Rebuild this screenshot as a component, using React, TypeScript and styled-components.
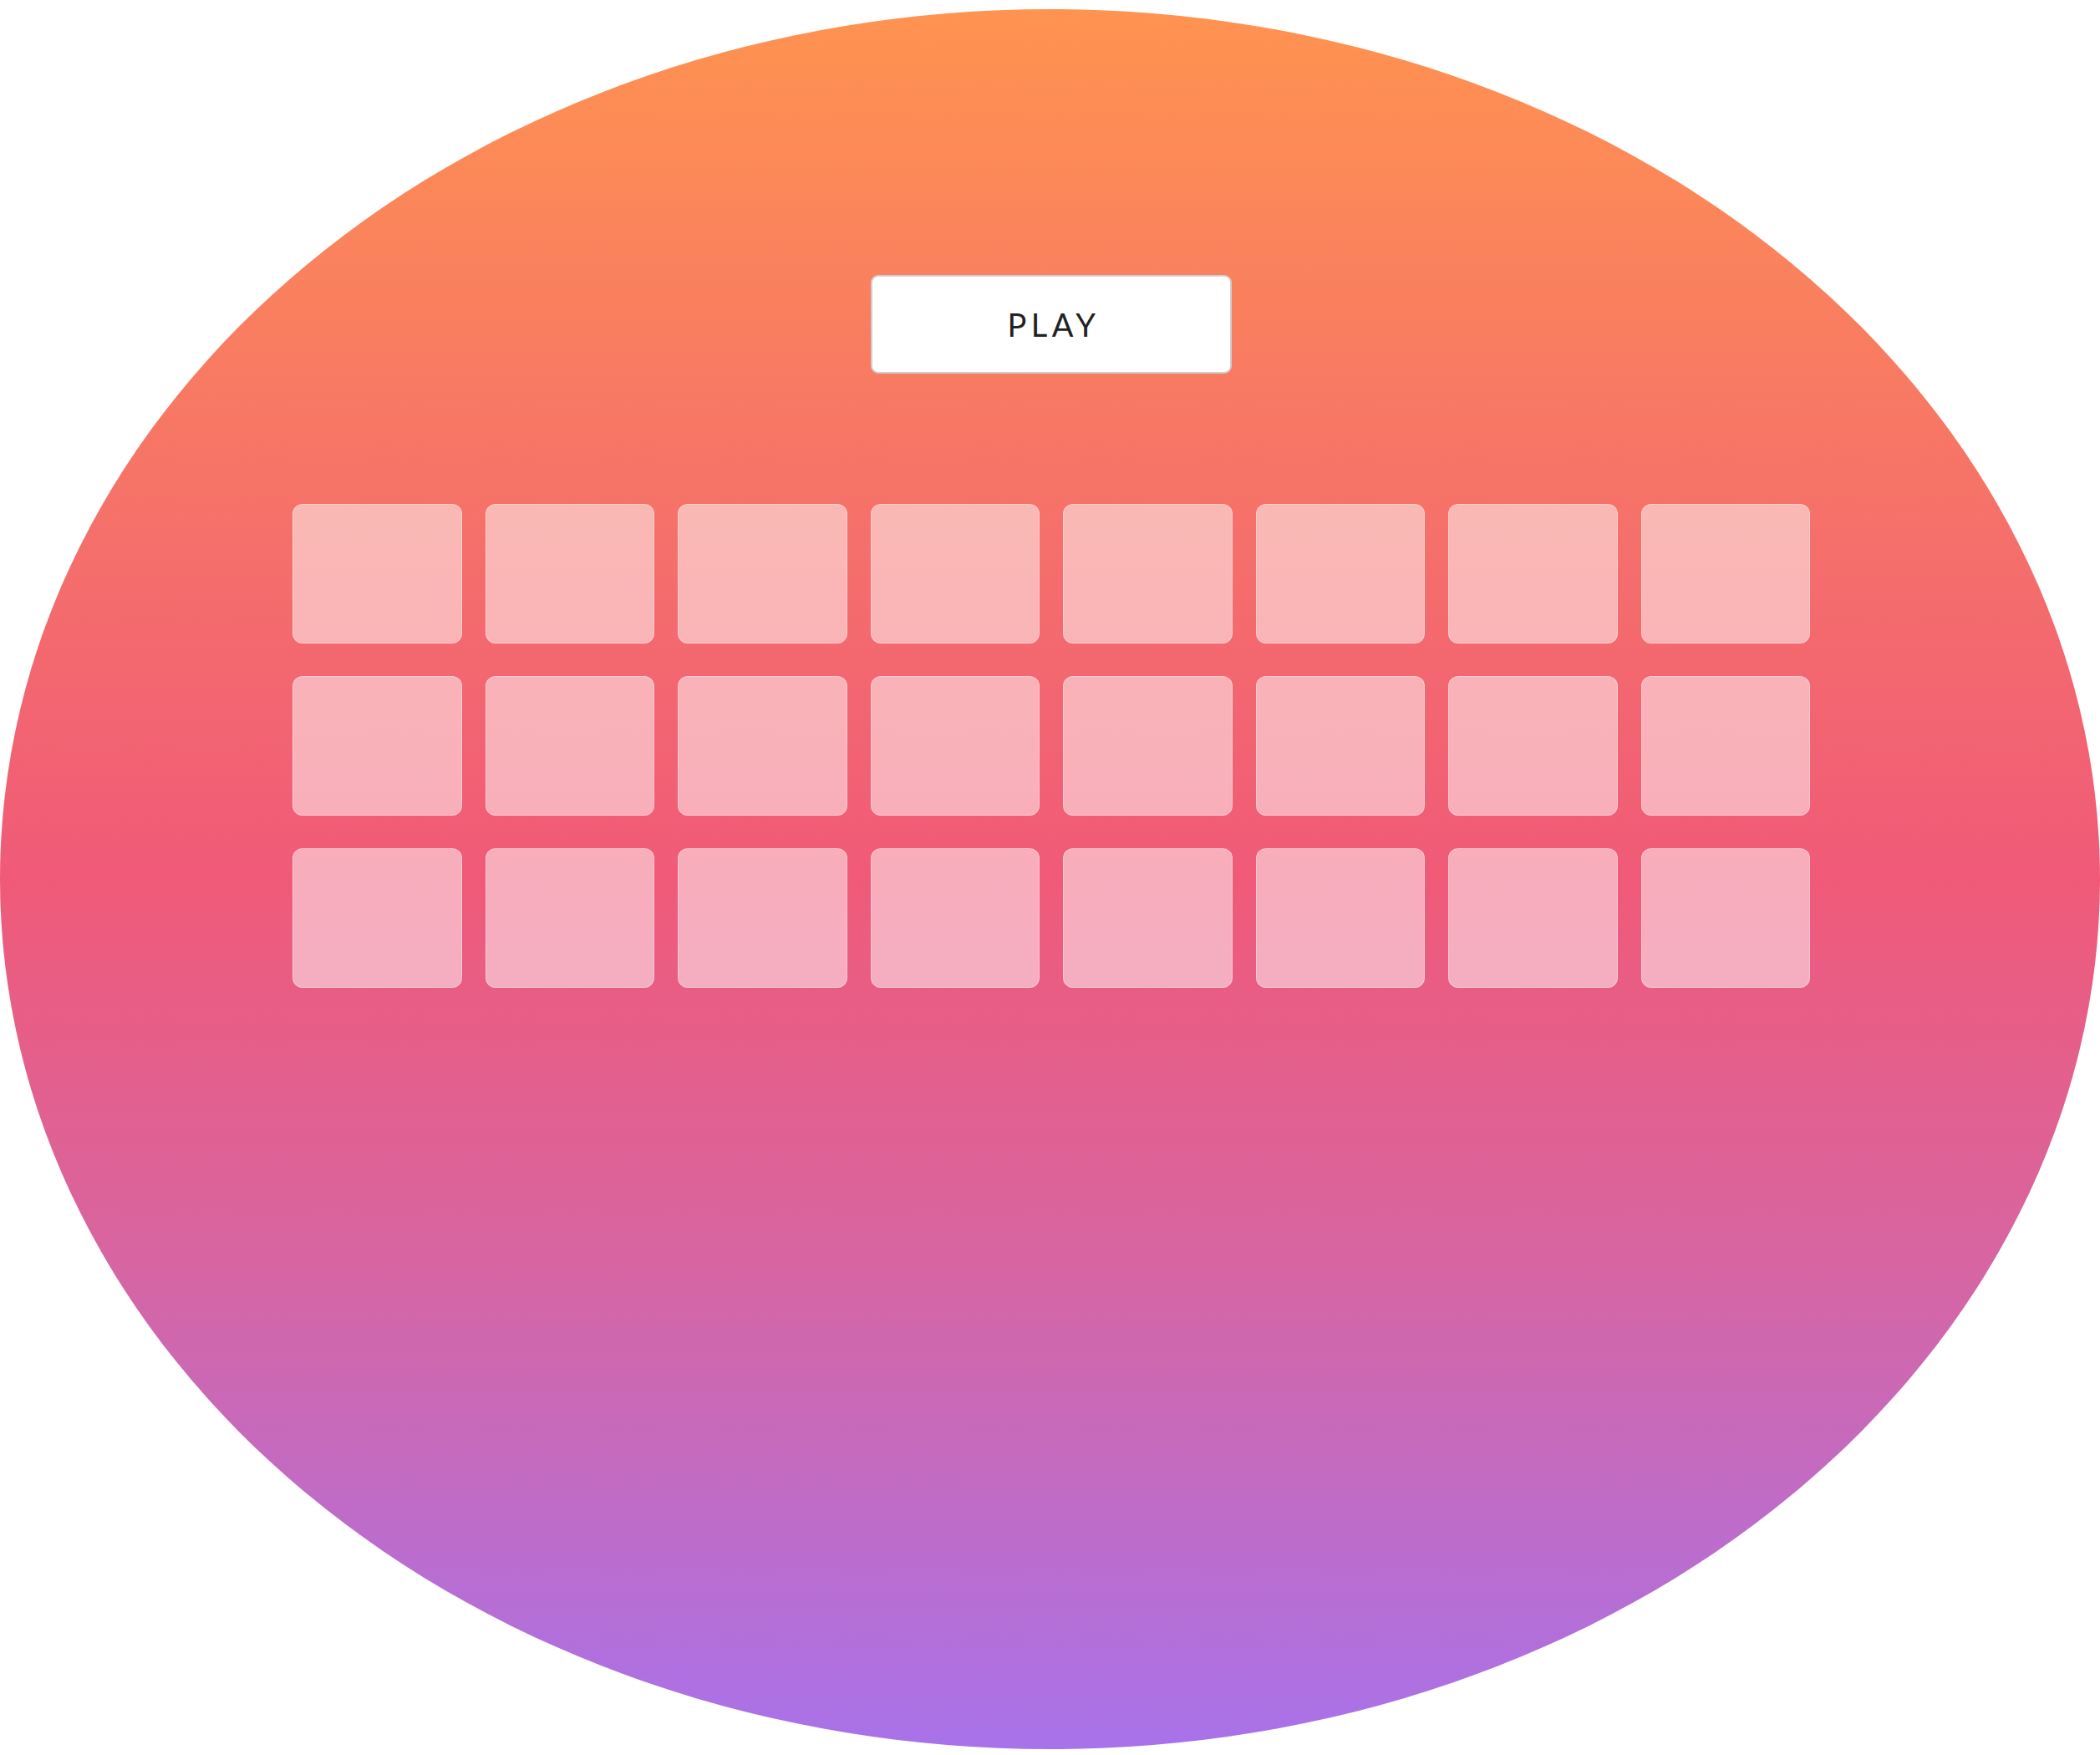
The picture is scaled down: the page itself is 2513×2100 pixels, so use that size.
import React from "react";
import styled, { createGlobalStyle } from "styled-components";

const GlobalStyle = createGlobalStyle`
  html, body {
    margin: 0;
    padding: 0;
    background: #ffffff;
  }
  body {
    font-family: Lato, "Open Sans", "Liberation Sans", sans-serif;
  }
`;

const Stage = styled.main`
  box-sizing: border-box;
  width: 100%;
  height: 2082px;
  margin-top: 11px;
  border-radius: 50%;
  background: linear-gradient(180deg, #ff9350 0%, #f5706a 30%, #f05a78 50%, #d765a2 72%, #a872ea 100%);
  display: flex;
  flex-direction: column;
  align-items: center;
  padding-top: 318px;
`;

const PlayButton = styled.button`
  box-sizing: border-box;
  width: 432px;
  height: 118px;
  margin-left: 3px;
  padding: 0 0 0 6px;
  background: #ffffff;
  border: 2px solid #cfcfcf;
  border-radius: 9px;
  font-family: Lato, "Open Sans", "Liberation Sans", sans-serif;
  font-size: 38px;
  font-weight: 400;
  letter-spacing: 5.5px;
  color: #222222;
  cursor: pointer;
`;

const Board = styled.div`
  margin-top: 156px;
  margin-left: 3px;
  display: grid;
  grid-template-columns: repeat(8, 202.5px);
  grid-auto-rows: 167px;
  column-gap: 28px;
  row-gap: 39px;
`;

const Tile = styled.div`
  box-sizing: border-box;
  border-radius: 12px;
  background: rgba(255, 255, 255, 0.5);
  border: 1px solid rgba(255, 255, 255, 0.35);
`;

export default function App() {
  const tiles = Array.from({ length: 24 }, (_, i) => i);
  return (
    <>
      <GlobalStyle />
      <Stage>
        <PlayButton>PLAY</PlayButton>
        <Board>
          {tiles.map((i) => (
            <Tile key={i} />
          ))}
        </Board>
      </Stage>
    </>
  );
}
